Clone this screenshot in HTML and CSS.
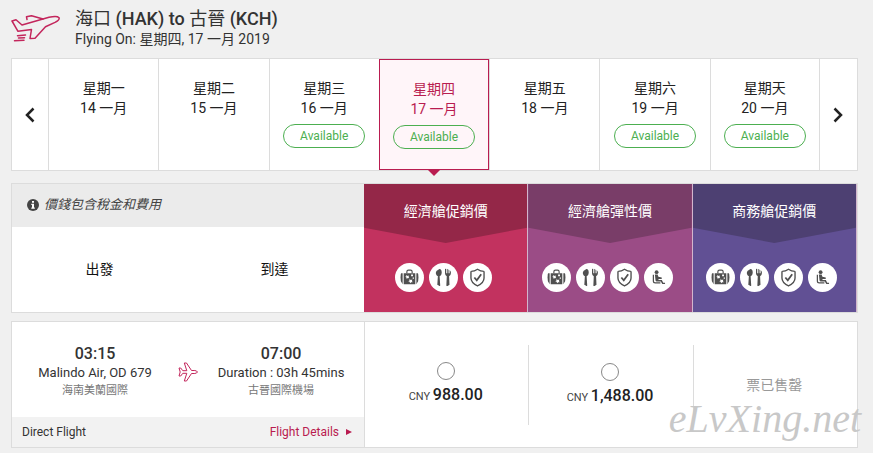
FILE: index.html
```html
<!DOCTYPE html>
<html lang="zh-Hant">
<head>
    <meta charset="UTF-8">
    <meta name="viewport" content="width=device-width, initial-scale=1.0">
    <title>海口 (HAK) to 古晉 (KCH)</title>
    <link rel="stylesheet" href="styles.css">
</head>
<body>
    <svg class="sprite" aria-hidden="true">
        <symbol id="icon-bag" viewBox="0 0 18 18">
            <path d="M6.500 5V3.600Q6.500 2 8 2h2q1.500 0 1.500 1.600V5" fill="none" stroke="#505050" stroke-width="1.100"/>
            <path d="M.5 5.500q0-.5.5-.5h1.500v10.500H1q-.5 0-.5-.5zM15.500 5H17q.5 0 .5.5V15q0 .5-.5.5h-1.500zM3.500 5h11v10.500h-11z" fill="#505050"/>
            <path d="M6 6.500l1.200 1 1.400-.3-.5 1.300.8 1.200-1.500-.2-1 1-.3-1.500-1.200-.6 1.200-.7zM10.500 6.200h1.800v1.600h-1.800zM9 10.500l1.200.8 1.500-.3-.4 1.300.7 1.200-1.400-.1-1 1.100-.5-1.500-1.300-.5 1.200-.6zM12 9h1.200v1.200H12z" fill="#fff"/>
        </symbol>
        <symbol id="icon-meal" viewBox="0 0 18 18">
            <ellipse cx="4.500" cy="4.200" rx="2.800" ry="3.500" fill="#505050"/>
            <path d="M3.700 7h1.600l.6 9.500q0 1-1.400 1t-1.400-1zM10.400.8h1.200V5h1V.8h1.200V5h1V.8H16V5q0 2-1.700 2.700l.4 8.800q0 1-1.500 1t-1.500-1l.4-8.800Q10.400 7 10.400 5z" fill="#505050"/>
        </symbol>
        <symbol id="icon-shield" viewBox="0 0 18 18">
            <path d="M9 1.200q2.800 2 6.200 2v6.300q0 4.500-6.200 7.500-6.200-3-6.200-7.500V3.200q3.400 0 6.200-2z" fill="none" stroke="#505050" stroke-width="1.300"/>
            <path d="M6 9l2.300 2.600L12.500 6" fill="none" stroke="#505050" stroke-width="1.700"/>
        </symbol>
        <symbol id="icon-seat" viewBox="-1 -1 20 20">
            <circle cx="7" cy="3.400" r="2" fill="#505050"/>
            <path d="M5.200 5.800h2.900l.8 2.500 3.500.7v1.500H8.900l.2 1.200h3.400l1.500 2.800h1.900v1.400h-2.900L11.400 13.200H7.300q-1.200 0-1.400-1z" fill="#505050"/>
            <path d="M3.600 6v6.700q0 2 2 2H11" fill="none" stroke="#505050" stroke-width="1.300"/>
        </symbol>
    </svg>

    <main class="page">
        <header class="route">
            <svg class="route-icon" viewBox="0 0 50 28" fill="none" stroke="#c3265c" stroke-width="1.500" stroke-linejoin="round" stroke-linecap="round">
                <path d="M1 6l4-1.200 6 5.200 27-7.700q8-1.800 10 .4 1 2-4 4.700l-9.500 4.300L24 23.300l-5 .2 1.500-9-13.500 1.800z"/>
                <path d="M16 4.500l-.5-2.700L20.500.7 32 4M6.500 20.700l8-.7M7.500 23l6-.3M3.500 25.800l9.500-.6"/>
            </svg>
            <div>
                <h1 class="route-title">海口 <b>(HAK) to</b> 古晉 <b>(KCH)</b></h1>
                <p class="route-date">Flying On: 星期四, 17 一月 2019</p>
            </div>
        </header>

        <nav class="dates">
            <button class="date-arrow" aria-label="Previous">
                <svg viewBox="0 0 10 16"><path d="M8.500 1.500L2 8l6.500 6.500"/></svg>
            </button>
            <button class="date"><span>星期一</span><span>14 一月</span></button>
            <button class="date"><span>星期二</span><span>15 一月</span></button>
            <button class="date"><span>星期三</span><span>16 一月</span><span class="badge">Available</span></button>
            <button class="date selected"><span>星期四</span><span>17 一月</span><span class="badge">Available</span></button>
            <button class="date"><span>星期五</span><span>18 一月</span></button>
            <button class="date"><span>星期六</span><span>19 一月</span><span class="badge">Available</span></button>
            <button class="date"><span>星期天</span><span>20 一月</span><span class="badge">Available</span></button>
            <button class="date-arrow" aria-label="Next">
                <svg viewBox="0 0 10 16"><path d="M1.500 1.500L8 8l-6.500 6.500"/></svg>
            </button>
        </nav>

        <section class="fares">
            <div class="fare-info">
                <p class="tax-note">
                    <svg class="info-icon" viewBox="0 0 12 12"><circle cx="6" cy="6" r="6" fill="#444"/><path d="M5 2h2v1.700H5zM4.300 4.800H7v3.700h.8v1.200H4.300V8.500H5V6h-.7z" fill="#fff"/></svg>
                    <em>價錢包含稅金和費用</em>
                </p>
                <div class="legs">
                    <span>出發</span>
                    <span>到達</span>
                </div>
            </div>
            <div class="fare promo">
                <h2 class="fare-name">經濟艙促銷價</h2>
                <div class="perks">
                    <svg class="perk"><use href="#icon-bag"/></svg>
                    <svg class="perk"><use href="#icon-meal"/></svg>
                    <svg class="perk"><use href="#icon-shield"/></svg>
                </div>
            </div>
            <div class="fare flexi">
                <h2 class="fare-name">經濟艙彈性價</h2>
                <div class="perks">
                    <svg class="perk"><use href="#icon-bag"/></svg>
                    <svg class="perk"><use href="#icon-meal"/></svg>
                    <svg class="perk"><use href="#icon-shield"/></svg>
                    <svg class="perk"><use href="#icon-seat"/></svg>
                </div>
            </div>
            <div class="fare business">
                <h2 class="fare-name">商務艙促銷價</h2>
                <div class="perks">
                    <svg class="perk"><use href="#icon-bag"/></svg>
                    <svg class="perk"><use href="#icon-meal"/></svg>
                    <svg class="perk"><use href="#icon-shield"/></svg>
                    <svg class="perk"><use href="#icon-seat"/></svg>
                </div>
            </div>
        </section>

        <section class="flight">
            <div class="flight-info">
                <div class="flight-legs">
                    <div class="leg">
                        <strong class="leg-time">03:15</strong>
                        <span class="leg-detail">Malindo Air, OD 679</span>
                        <span class="leg-airport">海南美蘭國際</span>
                    </div>
                    <svg class="leg-plane" viewBox="0 0 20 20" fill="none" stroke="#c3265c" stroke-linejoin="round">
                        <path d="M1 6h1.700l2.100 2.700h4L6.300 1H8.500l5 7.500h3.300q2.200.3 2.700 1.500-.5 1.200-2.700 1.500h-3.300l-5 7.500H6.300l2.500-7.700h-4L2.700 14H1l1.200-4z"/>
                    </svg>
                    <div class="leg">
                        <strong class="leg-time">07:00</strong>
                        <span class="leg-detail">Duration : 03h 45mins</span>
                        <span class="leg-airport">古晉國際機場</span>
                    </div>
                </div>
                <div class="flight-footer">
                    <span>Direct Flight</span>
                    <a class="details-link" href="#">Flight Details</a>
                </div>
            </div>
            <label class="price">
                <input class="price-radio" type="radio" name="fare">
                <span class="price-text">CNY <b>988.00</b></span>
            </label>
            <label class="price">
                <input class="price-radio" type="radio" name="fare">
                <span class="price-text">CNY <b>1,488.00</b></span>
            </label>
            <div class="price sold-out">票已售罄</div>
            <span class="watermark">eLvXing.net</span>
        </section>
    </main>
</body>
</html>
```

FILE: styles.css
```css
* {
    box-sizing: border-box;
}
body {
    margin: 0;
    background: #f0f0f0;
    color: #333;
    font-family: Roboto, "Noto Sans CJK TC", sans-serif;
    font-size: 14px;
    line-height: 20px;
}
h1, h2, p {
    margin: 0;
    font-weight: 400;
}
button {
    border: none;
    background: none;
    padding: 0;
    color: inherit;
    font: inherit;
    cursor: pointer;
}
.sprite {
    display: none;
}
.page {
    padding: 9px 15px 5px 11px;
}

/* route heading */
.route {
    display: flex;
    align-items: center;
    gap: 14px;
    margin-bottom: 9px;
}
.route-icon {
    width: 50px;
    height: 28px;
}
.route-title {
    font-size: 18px;
    line-height: 20px;
}
.route-title b {
    font-weight: 500;
}

/* date strip */
.dates {
    display: grid;
    grid-template-columns: 36px repeat(7, 1fr) 37px;
    background: #fff;
    border: 1px solid #dcdcdc;
    margin-bottom: 12px;
}
.date-arrow svg {
    width: 10px;
    height: 16px;
    display: block;
    margin: 0 auto;
    fill: none;
    stroke: #222;
    stroke-width: 2.5;
}
.date {
    position: relative;
    display: flex;
    flex-direction: column;
    align-items: center;
    min-height: 111px;
    padding-top: 19px;
    border-left: 1px solid #dcdcdc;
    color: #222;
}
.date:nth-last-child(2) {
    border-right: 1px solid #dcdcdc;
}
.date.selected {
    border: 1px solid #b91c50;
    background: #fff5f9;
    color: #b91c50;
}
.date.selected::after {
    content: "";
    position: absolute;
    top: 100%;
    left: 50%;
    margin-left: -7px;
    border: 7px solid transparent;
    border-top-color: #b91c50;
    border-bottom: none;
}
.badge {
    margin-top: 6px;
    padding: 0 16px;
    border: 1px solid #4caf50;
    border-radius: 12px;
    color: #4caf50;
    font-size: 12px;
    line-height: 22px;
}

/* fare classes */
.fares,
.flight {
    display: grid;
    grid-template-columns: 15fr 7fr 7fr 7fr;
    background: #fff;
    border: 1px solid #dcdcdc;
}
.fares {
    margin-bottom: 8px;
}
.fare-info {
    display: flex;
    flex-direction: column;
}
.tax-note {
    display: flex;
    align-items: center;
    gap: 5px;
    height: 43px;
    padding: 0 0 2px 15px;
    background: #ebebeb;
    color: #444;
    font-size: 13px;
}
.info-icon {
    width: 12px;
    height: 12px;
}
.legs {
    flex: 1;
    display: grid;
    grid-template-columns: 1fr 1fr;
    align-items: center;
    padding: 0 2px 2px 0;
    text-align: center;
    color: #111;
}
.fare {
    border-right: 1px solid #d3b6cd;
    color: #fff;
    text-align: center;
}
.fare-name {
    height: 59px;
    padding-top: 17px;
    font-size: 14px;
    line-height: 20px;
    clip-path: polygon(0 0, 100% 0, 100% 74%, 50% 100%, 0 74%);
}
.promo {
    background: #c2325f;
}
.promo .fare-name {
    background: #942748;
}
.flexi {
    background: #9b4c86;
}
.flexi .fare-name {
    background: #793d68;
}
.business {
    background: #615094;
}
.business .fare-name {
    background: #4d4072;
}
.perks {
    display: flex;
    justify-content: center;
    gap: 5px;
    padding: 20px 5px 20px 0;
}
.perk {
    width: 29px;
    height: 29px;
    padding: 5px;
    border-radius: 50%;
    background: #fff;
}

/* flight row */
.flight {
    position: relative;
}
.flight-legs {
    display: grid;
    grid-template-columns: 1fr 20px 1fr;
    align-items: center;
    padding: 22px 0 18px;
}
.leg {
    display: flex;
    flex-direction: column;
    align-items: center;
    line-height: 18px;
    white-space: nowrap;
}
.leg-time {
    font-size: 16px;
    font-weight: 500;
    line-height: 20px;
}
.leg-detail {
    font-size: 13px;
}
.leg-airport {
    color: #777;
    font-size: 11px;
    line-height: 17px;
}
.leg-plane {
    width: 20px;
    height: 20px;
}
.flight-footer {
    display: flex;
    justify-content: space-between;
    align-items: center;
    height: 30px;
    padding: 0 12px 0 10px;
    background: #f2f2f2;
    font-size: 12px;
}
.details-link {
    display: flex;
    align-items: center;
    gap: 7px;
    color: #b91c50;
    text-decoration: none;
}
.details-link::after {
    content: "";
    border: 3px solid transparent;
    border-left: 6px solid #b91c50;
    border-right: none;
}
.price {
    display: flex;
    flex-direction: column;
    align-items: center;
    justify-content: center;
    gap: 5px;
    margin: 23px 0 22px;
    padding-right: 2px;
    border-left: 1px solid #dcdcdc;
}
.flight-info + .price {
    margin: 0;
}
.price-radio {
    appearance: none;
    width: 18px;
    height: 18px;
    margin: 0;
    border: 1px solid #888;
    border-radius: 50%;
    background: #fff;
}
.price-radio:checked {
    background: #b91c50;
}
.price-text {
    color: #444;
    font-size: 11px;
}
.price-text b {
    color: #222;
    font-size: 16px;
    font-weight: 500;
}
.sold-out {
    color: #999;
}
.watermark {
    position: absolute;
    right: -4px;
    bottom: 4px;
    color: #c8c8c8;
    font-family: "Brush Script MT", "Liberation Serif", serif;
    font-size: 40px;
    font-style: italic;
    line-height: 48px;
    pointer-events: none;
}
```
